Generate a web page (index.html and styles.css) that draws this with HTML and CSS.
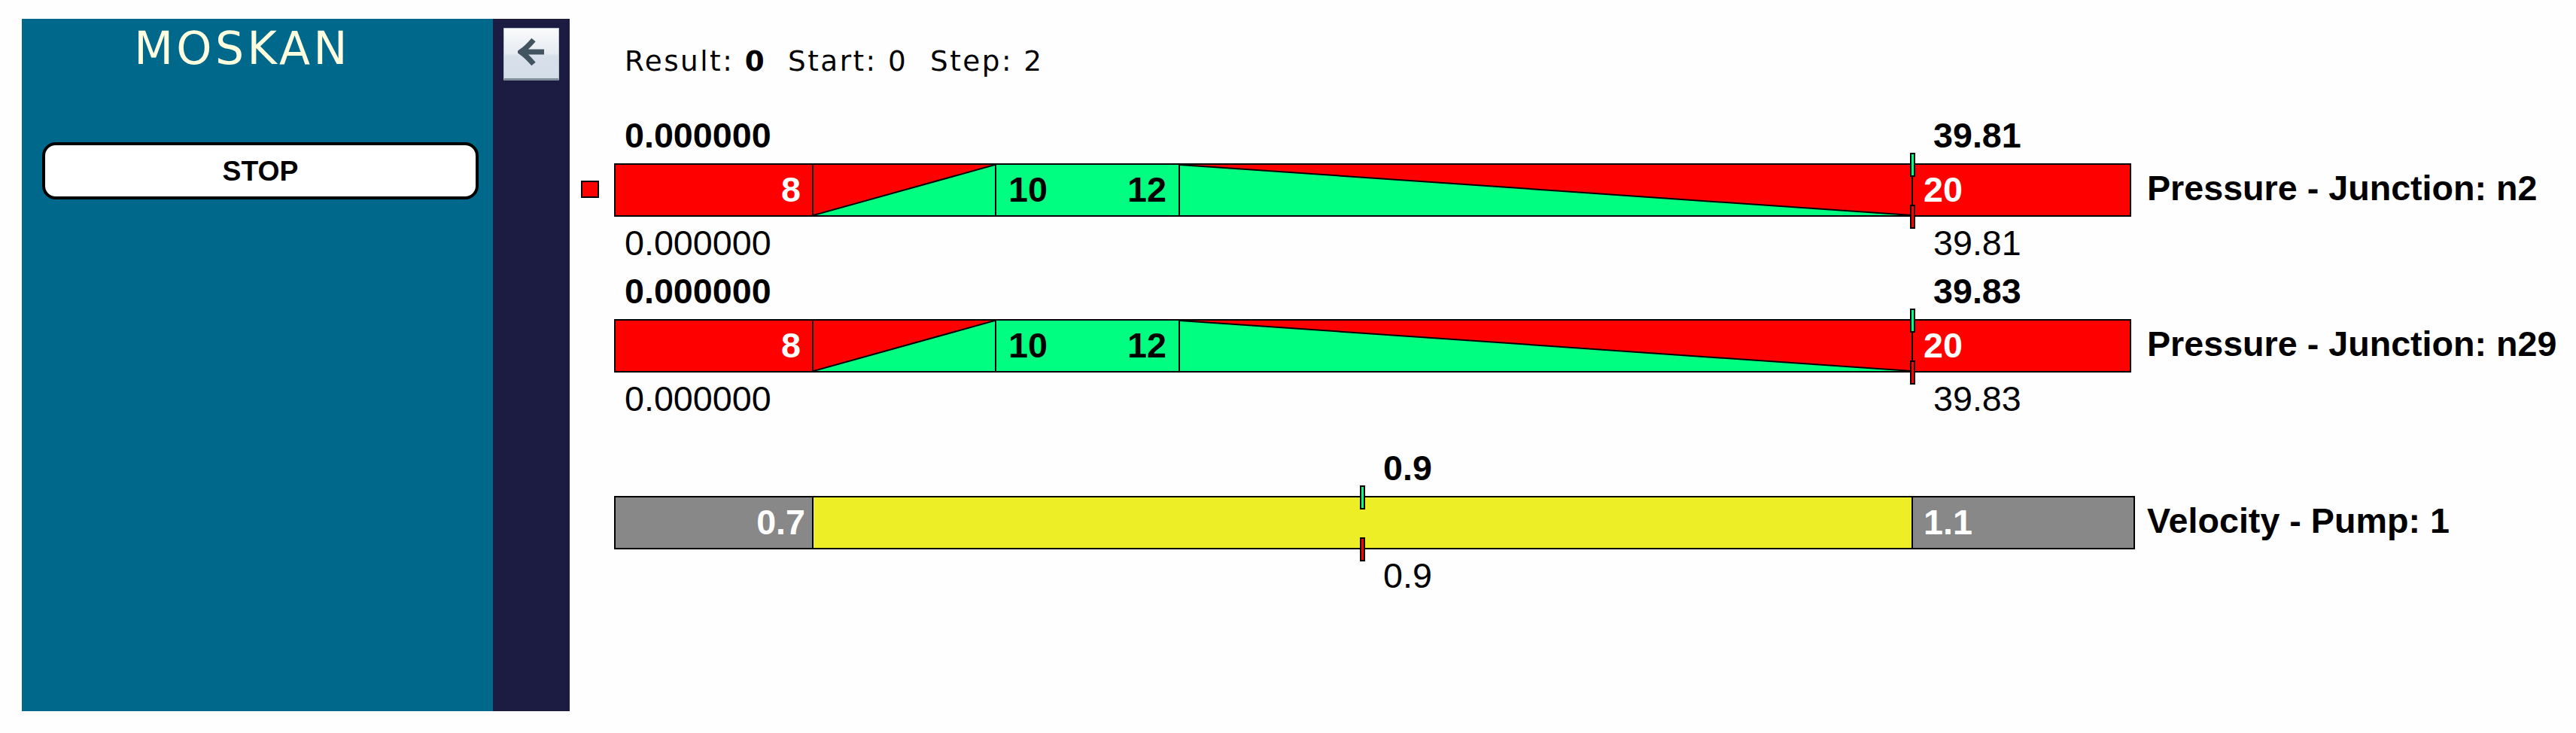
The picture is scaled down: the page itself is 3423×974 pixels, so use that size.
FILE: index.html
```
<!DOCTYPE html>
<html>
<head lang="en">
  <meta charset="UTF-8">
  <title>MOSKAN</title>
  <link rel="stylesheet" href="styles.css">
</head>
<body>
  <div class="sidebar">
    <div class="menu">
      <div class="title">MOSKAN</div>
      <button class="stop">STOP</button>
    </div>
    <div class="toggleBar">
      <button class="toggle">
        <svg class="arrow" viewBox="0 0 36 38">
          <path d="M35 19H4M21 3C15 10 10 15 4 19C10 23 15 28 21 35" />
        </svg>
      </button>
    </div>
  </div>
  <div class="main">
    <div class="info">
      <span class="result">Result: <b>0</b></span>
      <span class="start">Start: 0</span>
      <span class="step">Step: 2</span>
    </div>

    <div class="gauge">
      <div class="values valuesMax"><span class="valueFirst">0.000000</span><span>39.81</span></div>
      <div class="row">
        <div class="status"><div class="alarm"></div></div>
        <div class="track">
          <div class="bar">
            <div class="segment segmentRed segmentLow" style="width: 261px">8</div>
            <div class="segment segmentRed" style="width: 243px">
              <svg class="slope" viewBox="0 0 241 67" preserveAspectRatio="none"><path class="slopeFill" d="M0 67L241 0V67Z" /><path class="slopeLine" d="M0 67L241 0" /></svg>
            </div>
            <div class="segment segmentGreen" style="width: 244px"><span>10</span><span>12</span></div>
            <div class="segment segmentRed" style="width: 974px">
              <svg class="slope" viewBox="0 0 972 67" preserveAspectRatio="none"><path class="slopeFill" d="M0 0L972 67H0Z" /><path class="slopeLine" d="M0 0L972 67" /></svg>
            </div>
            <div class="segment segmentRed segmentHigh" style="width: 290px">20</div>
          </div>
          <div class="tick tickMax" style="left: 1721.5px"></div>
          <div class="tick tickMin" style="left: 1721.5px"></div>
        </div>
        <div class="label">Pressure - Junction: n2</div>
      </div>
      <div class="values"><span class="valueFirst">0.000000</span><span>39.81</span></div>
    </div>

    <div class="gauge">
      <div class="values valuesMax"><span class="valueFirst">0.000000</span><span>39.83</span></div>
      <div class="row">
        <div class="status"></div>
        <div class="track">
          <div class="bar">
            <div class="segment segmentRed segmentLow" style="width: 261px">8</div>
            <div class="segment segmentRed" style="width: 243px">
              <svg class="slope" viewBox="0 0 241 67" preserveAspectRatio="none"><path class="slopeFill" d="M0 67L241 0V67Z" /><path class="slopeLine" d="M0 67L241 0" /></svg>
            </div>
            <div class="segment segmentGreen" style="width: 244px"><span>10</span><span>12</span></div>
            <div class="segment segmentRed" style="width: 974px">
              <svg class="slope" viewBox="0 0 972 67" preserveAspectRatio="none"><path class="slopeFill" d="M0 0L972 67H0Z" /><path class="slopeLine" d="M0 0L972 67" /></svg>
            </div>
            <div class="segment segmentRed segmentHigh" style="width: 290px">20</div>
          </div>
          <div class="tick tickMax" style="left: 1721.5px"></div>
          <div class="tick tickMin" style="left: 1721.5px"></div>
        </div>
        <div class="label">Pressure - Junction: n29</div>
      </div>
      <div class="values"><span class="valueFirst">0.000000</span><span>39.83</span></div>
    </div>

    <div class="gauge gaugePump">
      <div class="values valuesMax">0.9</div>
      <div class="row">
        <div class="status"></div>
        <div class="track">
          <div class="bar">
            <div class="segment segmentGray segmentLow" style="width: 261px">0.7</div>
            <div class="segment segmentYellow" style="width: 1461px"></div>
            <div class="segment segmentGray segmentHigh" style="width: 295px">1.1</div>
          </div>
          <div class="tick tickMax" style="left: 991px"></div>
          <div class="tick tickMin" style="left: 991px"></div>
        </div>
        <div class="label">Velocity - Pump: 1</div>
      </div>
      <div class="values">0.9</div>
    </div>
  </div>
</body>
</html>
```
FILE: styles.css
```
* {
  box-sizing: border-box;
}
body {
  background: #fefefe;
  margin: 0;
  padding: 25px 0 0 29px;
  display: flex;
  height: 974px;
  overflow: hidden;
  font-family: "Liberation Sans", Arial, sans-serif;
  font-size: 46.67px;
  line-height: 53px;
  color: #000;
}
.sidebar {
  display: flex;
  flex: none;
  width: 728px;
  height: 920px;
}
.menu {
  width: 626px;
  padding: 0 19px 0 27px;
  background: #00688b;
}
.title {
  height: 164px;
  padding: 4px 48px 0 0;
  font-family: "DejaVu Sans", Verdana, sans-serif;
  font-size: 60px;
  line-height: 70px;
  letter-spacing: 4.4px;
  text-align: center;
  color: #ffffe0;
}
.stop {
  display: block;
  width: 580px;
  height: 76px;
  padding: 0;
  border: 4px solid #000;
  border-radius: 18px;
  background: #fff;
  font-family: inherit;
  font-size: 37.3px;
  font-weight: bold;
  color: #000;
}
.toggleBar {
  width: 102px;
  padding: 12px 0 0 14px;
  background: #1c1c42;
}
.toggle {
  display: flex;
  align-items: center;
  justify-content: center;
  width: 74px;
  height: 70px;
  padding: 0 1px 4px 0;
  border: 1px solid #b6c0ca;
  border-bottom: 3px solid #808e9b;
  border-radius: 1px;
  background: linear-gradient(#fafbfc, #e6ebf1 50%, #d8e0ea 55%, #d3dde8);
}
.arrow {
  width: 36px;
  height: 38px;
}
.arrow path {
  fill: none;
  stroke: #42545f;
  stroke-width: 7;
}
.main {
  flex: none;
  margin-left: 15px;
}
.info {
  display: flex;
  height: 128px;
  padding: 34px 0 0 58px;
  font-family: "DejaVu Sans", Verdana, sans-serif;
  font-size: 37.3px;
  line-height: 44px;
  letter-spacing: 2.5px;
  white-space: pre;
}
.result {
  width: 217px;
}
.start {
  width: 189px;
}
.gauge {
  height: 196px;
  margin-bottom: 11px;
}
.gaugePump {
  margin-top: 39px;
}
.values {
  display: flex;
  height: 53px;
  padding: 1px 0 0 58px;
}
.valuesMax {
  font-weight: bold;
}
.valueFirst {
  width: 1739px;
}
.gaugePump .values {
  padding-left: 1066px;
}
.row {
  display: flex;
  height: 71px;
  margin: 11px 0 8px;
}
.status {
  width: 44px;
  padding-top: 23px;
}
.alarm {
  width: 24px;
  height: 23px;
  border: 2px solid #000;
  background: #f00;
}
.track {
  position: relative;
  width: 2037px;
  font-weight: bold;
}
.bar {
  display: inline-flex;
  height: 71px;
  border: 2px solid #000;
}
.segment {
  display: flex;
  justify-content: space-between;
  padding-top: 7px;
  border-left: 2px solid #000;
}
.segment:first-child {
  border-left: 0;
}
.segmentRed {
  background: #f00;
  color: #fff;
}
.segmentGreen {
  padding-left: 16px;
  padding-right: 16px;
  background: #00ff80;
}
.segmentGray {
  background: #888;
  color: #fff;
}
.segmentYellow {
  background: #eeee27;
}
.segmentLow {
  justify-content: flex-end;
  padding-right: 15px;
}
.segmentGray.segmentLow {
  padding-right: 9px;
}
.segmentHigh {
  padding-left: 14px;
}
.slope {
  display: block;
  width: 100%;
  height: 67px;
  margin-top: -7px;
}
.slopeFill {
  fill: #00ff80;
}
.slopeLine {
  fill: none;
  stroke: #000;
  stroke-width: 2;
}
.tick {
  position: absolute;
  width: 7px;
  height: 32px;
  border: 2px solid #000;
}
.tickMax {
  top: -14px;
  background: #00ff80;
}
.tickMin {
  top: 55px;
  background: #f00;
}
.label {
  padding-top: 7px;
  font-weight: bold;
  white-space: nowrap;
}
```
